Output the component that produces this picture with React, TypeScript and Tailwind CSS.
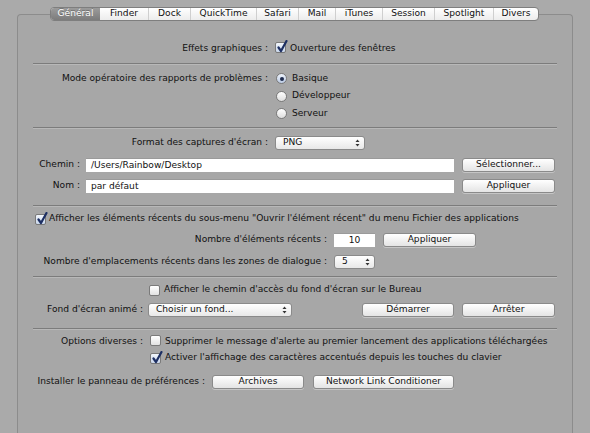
import React from "react";

const tabs: [string, number][] = [
  ["Général", 49],
  ["Finder", 48],
  ["Dock", 42],
  ["QuickTime", 66],
  ["Safari", 42],
  ["Mail", 37],
  ["iTunes", 47],
  ["Session", 52],
  ["Spotlight", 59],
  ["Divers", 45],
];

function Check({ checked }: { checked?: boolean }) {
  return (
    <span
      className={
        "relative inline-flex w-[11px] h-[11px] shrink-0 rounded-[2px] border border-[#7a7a7a] bg-gradient-to-b " +
        (checked ? "from-[#f2f6fc] to-[#c9d6ea]" : "from-white to-[#e2e2e2]")
      }
    >
      {checked && (
        <svg
          className="absolute left-[1px] top-[-3px]"
          width="11"
          height="13"
          viewBox="0 0 11 13"
        >
          <path d="M1.5 7.5 L4 11 L9.5 1" stroke="#1d2f63" strokeWidth="2.2" fill="none" strokeLinecap="round" strokeLinejoin="round" />
        </svg>
      )}
    </span>
  );
}

function Radio({ checked }: { checked?: boolean }) {
  return (
    <span
      className={
        "inline-flex w-[11px] h-[11px] shrink-0 rounded-full border border-[#7a7a7a] items-center justify-center bg-gradient-to-b " +
        (checked ? "from-[#eef3fb] to-[#bccbe4]" : "from-white to-[#dedede]")
      }
    >
      {checked && <span className="w-[4px] h-[4px] rounded-full bg-[#1d2a4d]" />}
    </span>
  );
}

function Button({ label, w }: { label: string; w: string }) {
  return (
    <div
      className={
        "h-[14px] shrink-0 rounded-[3px] border border-[#8a8a8a] bg-gradient-to-b from-white to-[#e4e4e4] flex items-center justify-center text-[#111] whitespace-nowrap shadow-[0_1px_0_rgba(255,255,255,0.35)] " +
        w
      }
    >
      {label}
    </div>
  );
}

function Popup({ label, w }: { label: string; w: string }) {
  return (
    <div
      className={
        "h-[14px] shrink-0 rounded-[3px] border border-[#8a8a8a] bg-gradient-to-b from-white to-[#e8e8e8] flex items-center justify-between pl-[7px] pr-[4px] text-[#111] whitespace-nowrap " +
        w
      }
    >
      <span>{label}</span>
      <svg width="5" height="8" viewBox="0 0 5 8">
        <path d="M0.5 3 L2.5 0.5 L4.5 3 Z" fill="#333" />
        <path d="M0.5 5 L2.5 7.5 L4.5 5 Z" fill="#333" />
      </svg>
    </div>
  );
}

function Input({ value, w, center }: { value: string; w: string; center?: boolean }) {
  return (
    <div
      className={
        "h-[14px] shrink-0 bg-white border-t border-[#9a9a9a] flex items-center text-[#111] whitespace-nowrap " +
        (center ? "justify-center " : "pl-[5px] ") +
        w
      }
    >
      {value}
    </div>
  );
}

function Sep({ mt }: { mt: string }) {
  return <div className={"h-[2px] border-t border-[#7c7c7c] border-b border-b-[#b8b8b8] " + mt} />;
}

export default function App() {
  return (
    <div className="w-[590px] h-[433px] overflow-hidden bg-[#aaaaaa] pt-[7px] font-['DejaVu_Sans',sans-serif] text-[9.1px] leading-none text-[#111] whitespace-nowrap">
      {/* tabs */}
      <div className="relative z-10 ml-[50px] flex h-[14px] w-[489px] rounded-[4px] border border-[#7e7e7e] overflow-hidden bg-gradient-to-b from-white to-[#ececec]">
        {tabs.map(([t, w], i) => (
          <div
            key={t}
            style={{ width: w }}
            className={
              "h-full flex items-center justify-center shrink-0 " +
              (i === 0
                ? "bg-gradient-to-b from-[#9b9b9b] to-[#7c7c7c] text-white [text-shadow:0_-1px_0_rgba(0,0,0,0.3)]"
                : "text-[#111] " + (i > 1 ? "border-l border-[#cfcfcf]" : ""))
            }
          >
            {t}
          </div>
        ))}
      </div>

      {/* box */}
      <div className="mx-[17px] -mt-[7px] h-[440px] rounded-t-[4px] border border-b-0 border-[#8c8c8c] bg-[#a7a7a7] px-[15px] pt-[1px] flex flex-col">
        {/* A */}
        <div className="mt-[25px] h-[15px] flex items-center">
          <div className="w-[235px] text-right shrink-0">Effets graphiques :</div>
          <div className="ml-[7px]"><Check checked /></div>
          <div className="ml-[4px]">Ouverture des fenêtres</div>
        </div>

        <Sep mt="mt-[7px]" />

        {/* B */}
        <div className="mt-[5px] h-[17px] flex items-center">
          <div className="w-[235px] text-right shrink-0">Mode opératoire des rapports de problèmes :</div>
          <div className="ml-[8px]"><Radio checked /></div>
          <div className="ml-[5px]">Basique</div>
        </div>
        <div className="h-[18px] flex items-center pl-[243px]">
          <Radio />
          <div className="ml-[5px]">Développeur</div>
        </div>
        <div className="h-[17px] flex items-center pl-[243px]">
          <Radio />
          <div className="ml-[5px]">Serveur</div>
        </div>

        <Sep mt="mt-[5px]" />

        {/* C */}
        <div className="mt-[7px] h-[14px] flex items-center">
          <div className="w-[235px] text-right shrink-0">Format des captures d'écran :</div>
          <div className="ml-[7px]"><Popup label="PNG" w="w-[90px]" /></div>
        </div>

        {/* D */}
        <div className="mt-[8px] h-[14px] flex items-center">
          <div className="w-[47px] text-right shrink-0">Chemin :</div>
          <div className="ml-[6px]"><Input value="/Users/Rainbow/Desktop" w="w-[368px]" /></div>
          <div className="ml-[8px]"><Button label="Sélectionner..." w="w-[93px]" /></div>
        </div>

        {/* E */}
        <div className="mt-[7px] h-[14px] flex items-center">
          <div className="w-[47px] text-right shrink-0">Nom :</div>
          <div className="ml-[6px]"><Input value="par défaut" w="w-[368px]" /></div>
          <div className="ml-[8px]"><Button label="Appliquer" w="w-[93px]" /></div>
        </div>

        <Sep mt="mt-[12px]" />

        {/* F */}
        <div className="mt-[4px] h-[16px] flex items-center pl-[2px]">
          <Check checked />
          <div className="ml-[3px]">
            Afficher les éléments récents du sous-menu "Ouvrir l'élément récent" du menu Fichier des applications
          </div>
        </div>

        {/* G */}
        <div className="mt-[6px] h-[14px] flex items-center">
          <div className="w-[294px] text-right shrink-0">Nombre d'éléments récents :</div>
          <div className="ml-[7px]"><Input value="10" w="w-[41px]" center /></div>
          <div className="ml-[8px]"><Button label="Appliquer" w="w-[93px]" /></div>
        </div>

        {/* H */}
        <div className="mt-[8px] h-[14px] flex items-center">
          <div className="w-[294px] text-right shrink-0">Nombre d'emplacements récents dans les zones de dialogue :</div>
          <div className="ml-[7px]"><Popup label="5" w="w-[41px]" /></div>
        </div>

        <Sep mt="mt-[7px]" />

        {/* I */}
        <div className="mt-[4px] h-[16px] flex items-center pl-[116px]">
          <Check />
          <div className="ml-[4px]">Afficher le chemin d'accès du fond d'écran sur le Bureau</div>
        </div>

        {/* J */}
        <div className="mt-[5px] h-[14px] flex items-center">
          <div className="w-[110px] text-right shrink-0">Fond d'écran animé :</div>
          <div className="ml-[5px]"><Popup label="Choisir un fond..." w="w-[144px]" /></div>
          <div className="ml-[70px]"><Button label="Démarrer" w="w-[92px]" /></div>
          <div className="ml-[8px]"><Button label="Arrêter" w="w-[93px]" /></div>
        </div>

        <Sep mt="mt-[11px]" />

        {/* K */}
        <div className="mt-[4px] h-[16px] flex items-center">
          <div className="w-[110px] text-right shrink-0">Options diverses :</div>
          <div className="ml-[7px]"><Check /></div>
          <div className="ml-[4px]">Supprimer le message d'alerte au premier lancement des applications téléchargées</div>
        </div>

        {/* L */}
        <div className="h-[16px] flex items-center pl-[117px]">
          <Check checked />
          <div className="ml-[4px]">Activer l'affichage des caractères accentués depuis les touches du clavier</div>
        </div>

        {/* M */}
        <div className="mt-[9px] h-[14px] flex items-center">
          <div className="w-[172px] text-right shrink-0">Installer le panneau de préférences :</div>
          <div className="ml-[7px]"><Button label="Archives" w="w-[92px]" /></div>
          <div className="ml-[9px]"><Button label="Network Link Conditioner" w="w-[141px]" /></div>
        </div>
      </div>
    </div>
  );
}
